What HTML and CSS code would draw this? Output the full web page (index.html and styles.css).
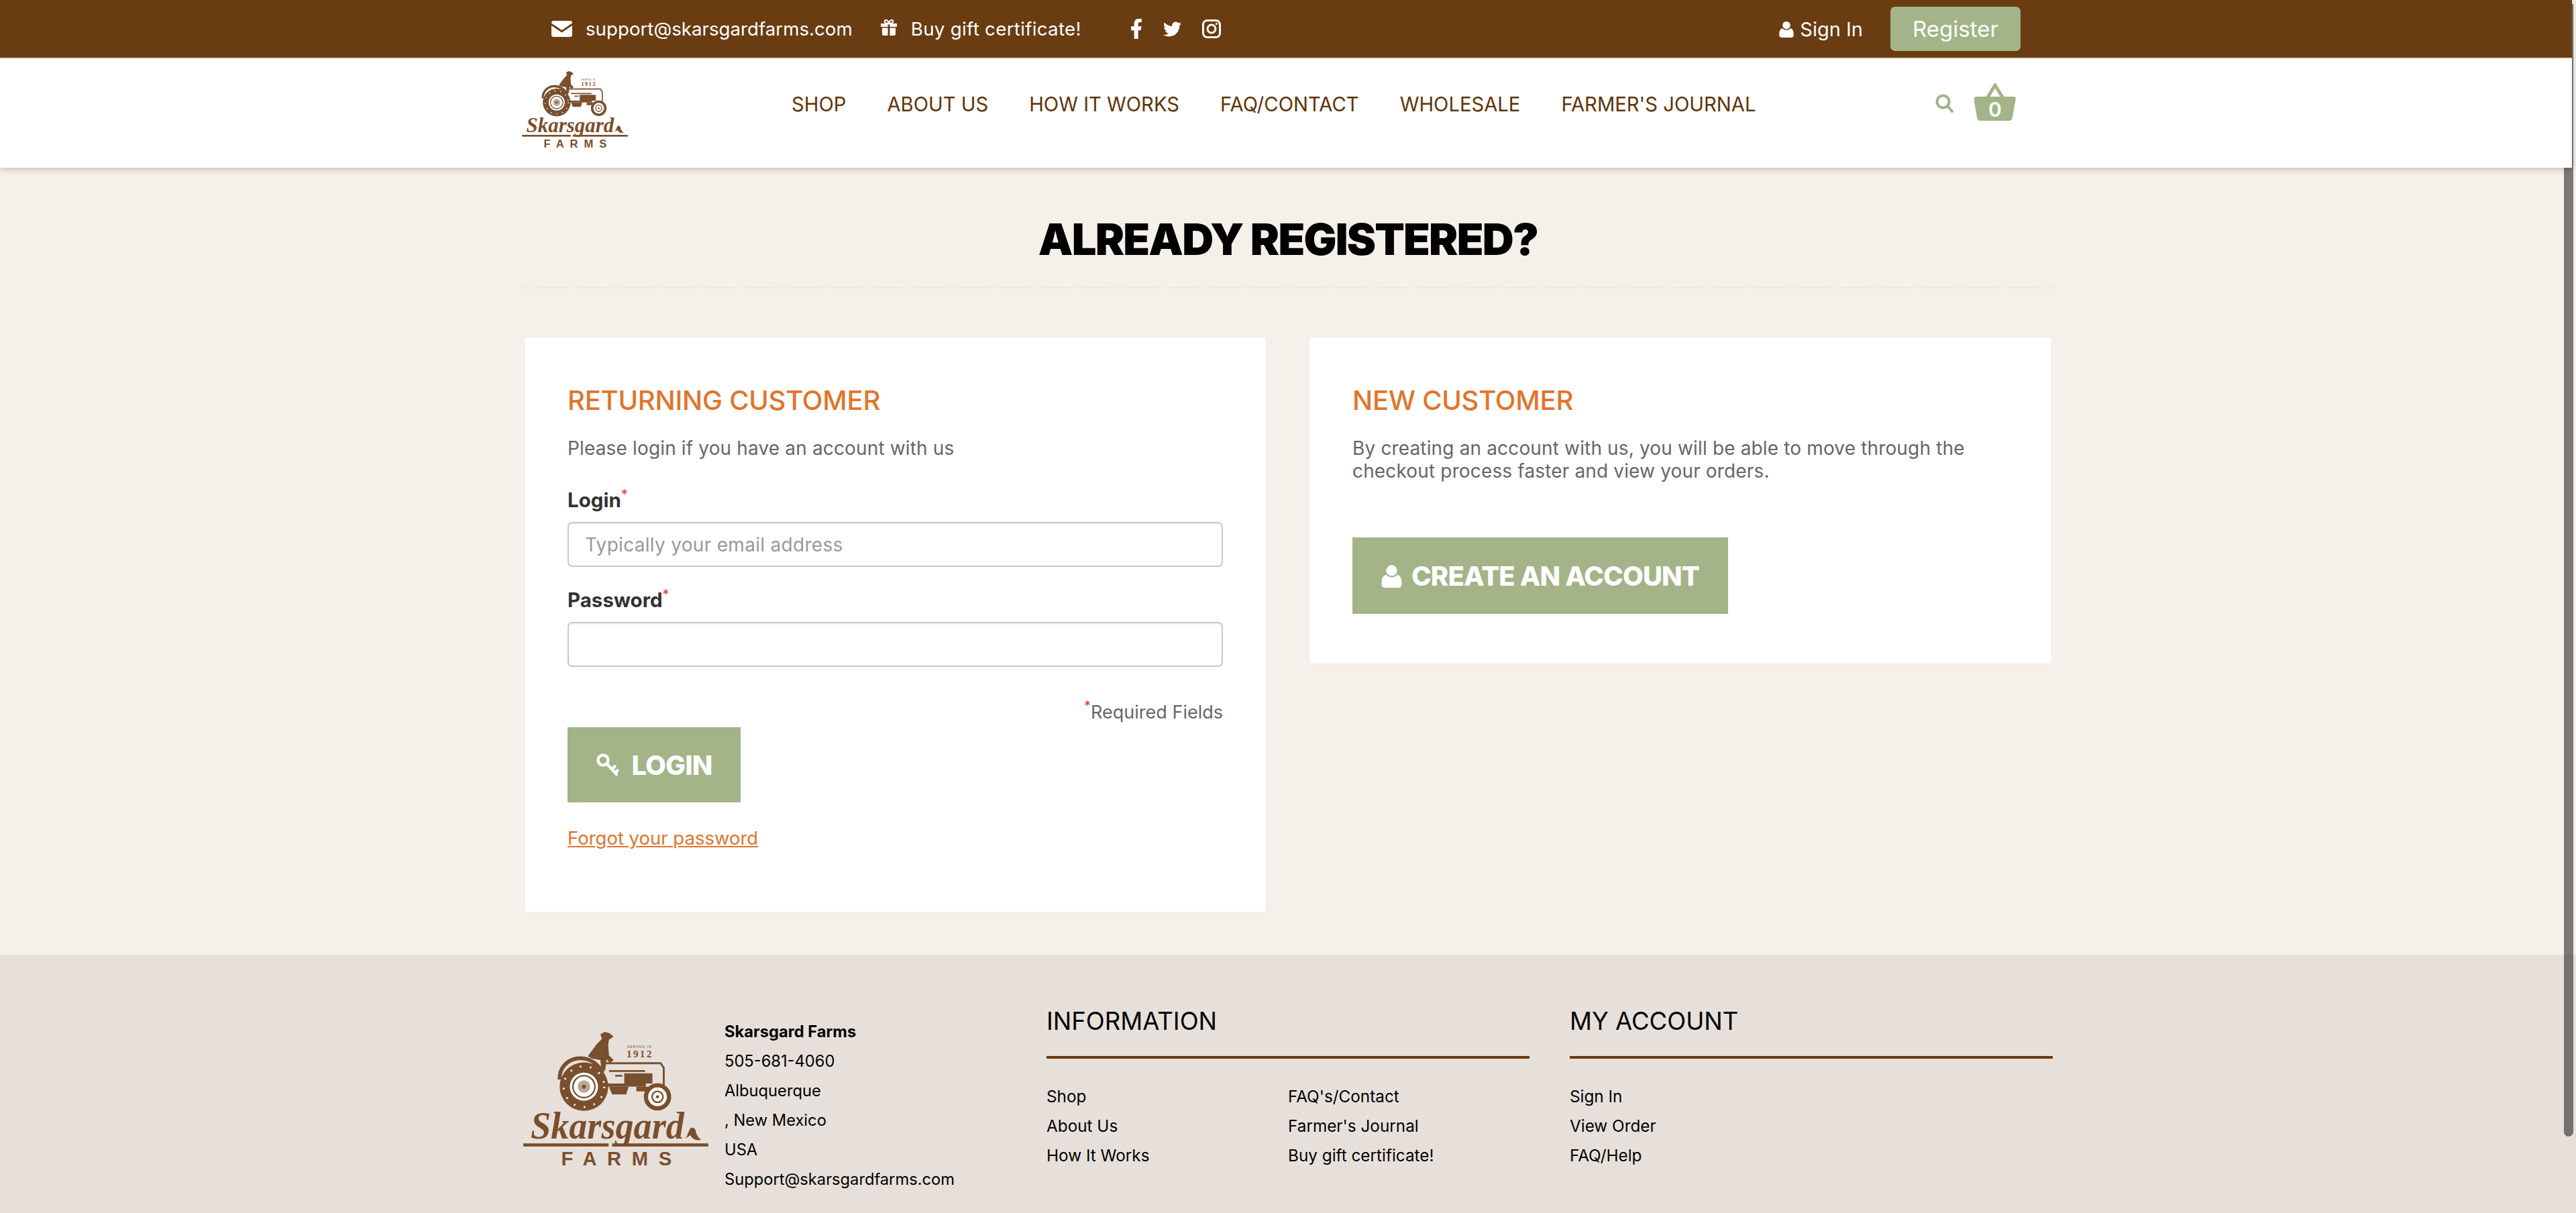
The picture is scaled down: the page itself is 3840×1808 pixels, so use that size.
FILE: index.html
```html
<!DOCTYPE html>
<html lang="en">
<head>
    <meta charset="UTF-8">
    <meta name="viewport" content="width=device-width, initial-scale=1.0">
    <title>Customer Login - Skarsgard Farms</title>
    <link rel="stylesheet" href="styles.css">
</head>
<body>
    <svg class="icon-defs" width="0" height="0" aria-hidden="true">
        <symbol id="user" viewBox="0 0 24 28">
            <circle cx="12" cy="7.5" r="6.5"/>
            <path d="M5.5 12.5c1.6 2 4 3 6.500 3s4.900-1 6.500-3c3.500.5 5.500 4 5.500 9v2.500c0 2.200-1.600 4-4 4h-16c-2.400 0-4-1.800-4-4v-2.500c0-5 2-8.500 5.500-9z"/>
        </symbol>
        <g id="logo-art">
            <!-- driver -->
            <path d="M192 112l22-30 14-14-4-12 12-6 12 4 10 8-12 8-2 14 2 26 12 12-10 8-8-10-4 30-10-6-2-22-22-4z"/>
            <!-- fender -->
            <path class="logo-line" d="M120 172c-2-28 18-50 44-54 26-3 50 8 66 36"/>
            <!-- hood and engine -->
            <path class="logo-thin" d="M232 130h146l8 12v46h-22M246 150h92M262 162h18"/>
            <rect x="285" y="156" width="72" height="26"/>
            <rect x="240" y="182" width="100" height="8"/>
            <path d="M246 190h50l-6 20h-36zM316 190h30v12h-30z"/>
            <!-- rear wheel -->
            <circle cx="182" cy="190" r="62"/>
            <circle class="logo-tread" cx="182" cy="190" r="52"/>
            <circle class="logo-cut" cx="182" cy="190" r="36"/>
            <circle class="logo-ring" cx="182" cy="190" r="28"/>
            <circle class="logo-hub" cx="182" cy="190" r="16"/>
            <circle cx="182" cy="190" r="5"/>
            <!-- front wheel -->
            <circle cx="370" cy="216" r="35"/>
            <circle class="logo-cut" cx="370" cy="216" r="24"/>
            <circle class="logo-ring" cx="370" cy="216" r="14"/>
            <circle cx="370" cy="216" r="4"/>
            <!-- plough tail and rule -->
            <path d="M440 322c6-2 8-16 14-26 8-4 14 2 14 10 2 8 8 16 14 20-12 2-22 0-28-12-4 2-6 6-14 8z"/>
            <rect x="27" y="335" width="218" height="8"/>
            <rect x="254" y="335" width="246" height="8"/>
        </g>
    </svg>

    <div class="scroll-thumb"></div>

    <header class="site-header">
        <div class="topbar">
            <div class="wrap topbar-inner">
                <a class="top-link email-link" href="#">
                    <svg class="icon-mail" viewBox="0 0 31 24">
                        <path d="M3 0h25c1.700 0 3 1.300 3 3v.5L15.500 14 0 3.500V3c0-1.700 1.300-3 3-3z"/>
                        <path d="M0 7l15.500 10.500L31 7v14c0 1.700-1.300 3-3 3H3c-1.700 0-3-1.300-3-3z"/>
                    </svg>
                    support@skarsgardfarms.com
                </a>
                <a class="top-link gift-link" href="#">
                    <svg class="icon-gift" viewBox="0 0 24 24">
                        <path d="M0 6h10.500v5H0zM13.500 6H24v5H13.500zM2 12.500h8.500V24H4c-1.100 0-2-.9-2-2zM13.500 12.500H22V22c0 1.100-.9 2-2 2h-6.500z"/>
                        <path class="icon-bow" d="M12 6C9 6 5.500 5 5.500 2.800 5.500.8 8.500.3 10 1.800c1 1 2 4.200 2 4.200s1-3.200 2-4.200c1.500-1.500 4.500-1 4.500 1C18.500 5 15 6 12 6z"/>
                    </svg>
                    Buy gift certificate!
                </a>
                <div class="socials">
                    <a href="#"><svg class="icon-fb" viewBox="7 2 10.500 20"><path d="M14 13.500h2.500l1-4H14v-2c0-1.030 0-2 2-2h1.500V2.140C17.174 2.097 15.943 2 14.643 2 11.928 2 10 3.657 10 6.700v2.800H7v4h3V22h4v-8.500z"/></svg></a>
                    <a href="#"><svg class="icon-tw" viewBox="0 2 24 20"><path d="M23.953 4.570a10 10 0 01-2.825.775 4.958 4.958 0 002.163-2.723c-.951.555-2.005.959-3.127 1.184a4.920 4.920 0 00-8.384 4.482C7.690 8.095 4.067 6.130 1.640 3.162a4.822 4.822 0 00-.666 2.475c0 1.710.870 3.213 2.188 4.096a4.904 4.904 0 01-2.228-.616v.060a4.923 4.923 0 003.946 4.827 4.996 4.996 0 01-2.212.085 4.936 4.936 0 004.604 3.417 9.867 9.867 0 01-6.102 2.105c-.390 0-.779-.023-1.170-.067a13.995 13.995 0 007.557 2.209c9.053 0 13.998-7.496 13.998-13.985 0-.210 0-.420-.015-.630A9.935 9.935 0 0024 4.590z"/></svg></a>
                    <a href="#"><svg class="icon-ig" viewBox="0 0 28 28"><rect x="1.500" y="1.500" width="25" height="25" rx="6"/><circle cx="14" cy="14" r="6"/><circle class="icon-dot" cx="21.500" cy="6.500" r="1.600"/></svg></a>
                </div>
                <div class="account-links">
                    <a class="sign-in" href="#"><svg class="icon-user"><use href="#user"/></svg>Sign In</a>
                    <a class="register-btn" href="#">Register</a>
                </div>
            </div>
        </div>
        <div class="navbar">
            <div class="wrap navbar-inner">
                <svg class="nav-logo" viewBox="27 50 473 360">
                    <g class="logo-art">
                        <use href="#logo-art"/>
                        <text class="logo-small" x="323" y="92" text-anchor="middle" textLength="62">SERVED IN</text>
                        <text class="logo-year" x="323" y="115" text-anchor="middle" textLength="64">1912</text>
                        <text class="logo-name" x="46" y="322" textLength="392" lengthAdjust="spacingAndGlyphs">Skarsgard</text>
                        <text class="logo-farms" x="124" y="391" textLength="282">FARMS</text>
                    </g>
                </svg>
                <nav class="main-nav">
                    <a href="#">SHOP</a>
                    <a href="#">ABOUT US</a>
                    <a href="#">HOW IT WORKS</a>
                    <a href="#">FAQ/CONTACT</a>
                    <a href="#">WHOLESALE</a>
                    <a href="#">FARMER'S JOURNAL</a>
                </nav>
                <svg class="icon-search" viewBox="0 0 27 28">
                    <circle cx="11.500" cy="11.500" r="9"/>
                    <path d="M18 18l7 8"/>
                </svg>
                <div class="basket">
                    <svg class="icon-basket" viewBox="0 0 62 56">
                        <path class="basket-handle" d="M18 24L31 3l13 21"/>
                        <path d="M3 20h56c2 0 3 1.500 2.800 3.500l-5 28c-.4 2.500-2 4.500-4.800 4.500H9c-2.800 0-4.400-2-4.800-4.500l-5-28C0 21.500 1 20 3 20z"/>
                    </svg>
                    <span class="basket-count">0</span>
                </div>
            </div>
        </div>
    </header>

    <main class="wrap page-main">
        <h1 class="page-title">ALREADY REGISTERED?</h1>
        <div class="cards">
            <section class="card">
                <h2>RETURNING CUSTOMER</h2>
                <p>Please login if you have an account with us</p>
                <form class="login-form">
                    <label for="login">Login<span class="req">*</span></label>
                    <input type="text" id="login" placeholder="Typically your email address">
                    <label class="password-label" for="password">Password<span class="req">*</span></label>
                    <input type="password" id="password">
                    <div class="required-note"><span class="req">*</span>Required Fields</div>
                    <button type="button" class="action-btn login-btn">
                        <svg class="icon-key" viewBox="0 0 36 36">
                            <circle cx="11" cy="11" r="7.500"/>
                            <path d="M16.500 16.500L31 32M24 24.500l4.500-4M29 29.500l3.500-3"/>
                        </svg>
                        LOGIN
                    </button>
                    <a class="forgot-link" href="#">Forgot your password</a>
                </form>
            </section>
            <section class="card">
                <h2>NEW CUSTOMER</h2>
                <p>By creating an account with us, you will be able to move through the checkout process faster and view your orders.</p>
                <a class="action-btn create-btn" href="#"><svg class="icon-user-lg"><use href="#user"/></svg>CREATE AN ACCOUNT</a>
            </section>
        </div>
    </main>

    <footer class="site-footer">
        <div class="wrap footer-grid">
            <div class="footer-brand">
                <svg class="footer-logo" viewBox="27 50 473 360">
                    <g class="logo-art">
                        <use href="#logo-art"/>
                        <text class="logo-small" x="323" y="92" text-anchor="middle" textLength="62">SERVED IN</text>
                        <text class="logo-year" x="323" y="115" text-anchor="middle" textLength="64">1912</text>
                        <text class="logo-name" x="46" y="322" textLength="392" lengthAdjust="spacingAndGlyphs">Skarsgard</text>
                        <text class="logo-farms" x="124" y="391" textLength="282">FARMS</text>
                    </g>
                </svg>
                <address>
                    <strong>Skarsgard Farms</strong>
                    <div>505-681-4060</div>
                    <div>Albuquerque</div>
                    <div>, New Mexico</div>
                    <div>USA</div>
                    <div>Support@skarsgardfarms.com</div>
                </address>
            </div>
            <div class="footer-col">
                <h3>INFORMATION</h3>
                <ul class="footer-links two-col">
                    <li><a href="#">Shop</a></li>
                    <li><a href="#">FAQ's/Contact</a></li>
                    <li><a href="#">About Us</a></li>
                    <li><a href="#">Farmer's Journal</a></li>
                    <li><a href="#">How It Works</a></li>
                    <li><a href="#">Buy gift certificate!</a></li>
                </ul>
            </div>
            <div class="footer-col">
                <h3>MY ACCOUNT</h3>
                <ul class="footer-links">
                    <li><a href="#">Sign In</a></li>
                    <li><a href="#">View Order</a></li>
                    <li><a href="#">FAQ/Help</a></li>
                </ul>
            </div>
        </div>
    </footer>
</body>
</html>
```

FILE: styles.css
```css
* {
    box-sizing: border-box;
}
html, body {
    height: 1808px;
    overflow: hidden;
}
body {
    margin: 0;
    background-color: #f5f0e9;
    font-family: Inter, "Open Sans", sans-serif;
    color: #666;
    display: flex;
    flex-direction: column;
}
a {
    color: inherit;
    text-decoration: none;
}
.icon-defs {
    position: absolute;
}
.wrap {
    width: 2280px;
    margin: 0 auto;
}

/* fake overlay scrollbar */
.scroll-thumb {
    position: absolute;
    top: 6px;
    right: 4px;
    width: 14px;
    height: 1688px;
    background: rgba(0, 0, 0, 0.5);
    border-radius: 0 0 7px 7px;
    z-index: 1;
}

/* header */
.site-header {
    position: relative;
    z-index: 2;
    width: 3834px;
    box-shadow: 0 2px 10px rgba(0, 0, 0, 0.22);
}
.topbar {
    background: #693c12;
    height: 88px;
    border-bottom: 2px solid #e7e0da;
    color: white;
}
.topbar-inner {
    height: 86px;
    display: flex;
    align-items: center;
    padding: 0 45px 0 45px;
    font-size: 27.7px;
}
.top-link {
    display: flex;
    align-items: center;
}
.top-link svg {
    fill: white;
}
.icon-mail {
    width: 31px;
    height: 24px;
    margin-right: 20px;
}
.gift-link {
    margin-left: 42px;
    letter-spacing: 0.3px;
}
.icon-gift {
    width: 24px;
    height: 24px;
    margin-right: 21px;
    margin-top: -4px;
}
.icon-gift .icon-bow {
    fill: none;
    stroke: white;
    stroke-width: 2;
}
.socials {
    display: flex;
    align-items: center;
    margin-left: 74px;
}
.socials a {
    display: flex;
}
.socials svg {
    fill: white;
}
.icon-fb {
    width: 16px;
    height: 30px;
}
.icon-tw {
    width: 27px;
    height: 23px;
    margin-left: 32px;
}
.icon-ig {
    width: 28px;
    height: 28px;
    margin-left: 31px;
}
.socials .icon-ig {
    fill: none;
    stroke: white;
    stroke-width: 3;
}
.socials .icon-ig .icon-dot {
    fill: white;
    stroke: none;
}
.account-links {
    margin-left: auto;
    display: flex;
    align-items: center;
}
.sign-in {
    display: flex;
    align-items: center;
    font-size: 29px;
}
.icon-user {
    width: 22px;
    height: 25px;
    margin-right: 9px;
    fill: white;
}
.register-btn {
    margin-left: 41px;
    width: 194px;
    height: 66px;
    margin-bottom: 1px;
    background: #a2b488;
    border-radius: 7px;
    font-size: 33px;
    display: flex;
    align-items: center;
    justify-content: center;
}
.navbar {
    background: white;
    height: 162px;
}
.navbar-inner {
    height: 162px;
    display: flex;
    align-items: center;
}
.nav-logo {
    width: 158px;
    height: 120px;
    margin-left: 1px;
    margin-top: -7px;
}
.main-nav {
    display: flex;
    gap: 61px;
    margin-left: 244px;
    font-size: 29.2px;
    color: #5f3409;
    margin-top: -27px;
}
.icon-search {
    width: 27px;
    height: 28px;
    margin-left: auto;
    margin-top: -30px;
    fill: none;
    stroke: #a2b488;
    stroke-width: 4;
    stroke-linecap: round;
}
.basket {
    position: relative;
    width: 62px;
    height: 56px;
    margin-left: 31px;
    margin-right: 52px;
    margin-top: -34px;
}
.icon-basket {
    display: block;
    width: 62px;
    height: 56px;
    fill: #a2b488;
}
.icon-basket .basket-handle {
    fill: none;
    stroke: #a2b488;
    stroke-width: 5;
}
.basket-count {
    position: absolute;
    left: 0;
    right: 0;
    top: 22px;
    text-align: center;
    color: white;
    font-size: 30px;
    font-weight: 600;
    line-height: 34px;
}

/* login area */
.page-main {
    flex: none;
    padding-bottom: 63px;
}
.page-title {
    margin: 0 0 72px;
    height: 180px;
    padding-top: 67px;
    line-height: 80px;
    font-size: 65px;
    font-weight: 900;
    letter-spacing: -1.8px;
    color: black;
    text-align: center;
    border-bottom: 2px dashed #e6e6e6;
}
.cards {
    display: grid;
    grid-template-columns: 1107px 1108px;
    gap: 63px;
    align-items: start;
    margin-left: 1px;
}
.card {
    background: white;
    border: 1px solid #ebebeb;
    border-radius: 4px;
    padding: 69px 64px 74px 64px;
}
.card h2 {
    margin: 0;
    font-size: 40px;
    font-weight: 500;
    letter-spacing: -0.25px;
    line-height: 50px;
    color: #e0752c;
}
.card p {
    margin: 29px 0 0;
    font-size: 28px;
    letter-spacing: 0.15px;
    line-height: 34px;
}
.login-form {
    display: flex;
    flex-direction: column;
    align-items: flex-start;
    margin-top: 43px;
}
.login-form label {
    font-size: 29.5px;
    font-weight: 700;
    line-height: 34px;
    color: #333;
}
.login-form .password-label {
    margin-top: 32px;
}
.req {
    color: #e8392a;
    font-size: 20px;
    font-weight: 400;
    vertical-align: 12px;
    line-height: 0;
}
.login-form input {
    width: 100%;
    height: 67px;
    margin-top: 16px;
    padding: 0 24px;
    border: 2px solid #c8c8c8;
    border-radius: 7px;
    box-shadow: inset 0 2px 2px rgba(0, 0, 0, 0.05);
    font-family: inherit;
    font-size: 28px;
    letter-spacing: 0.3px;
    outline: none;
}
.login-form input::placeholder {
    color: #999;
}
.required-note {
    align-self: flex-end;
    margin-top: 51px;
    font-size: 27px;
    line-height: 34px;
}
.action-btn {
    display: flex;
    align-items: center;
    justify-content: center;
    background: #a2b488;
    color: white;
    border: none;
    font-family: inherit;
    font-size: 40px;
    font-weight: 800;
    letter-spacing: -0.9px;
    cursor: pointer;
}
.login-btn {
    width: 258px;
    height: 112px;
    margin-top: 5px;
}
.icon-key {
    width: 36px;
    height: 36px;
    margin-right: 17px;
    fill: none;
    stroke: white;
    stroke-width: 4.500;
    stroke-linecap: round;
}
.forgot-link {
    margin-top: 36px;
    margin-bottom: 19px;
    font-size: 27.5px;
    line-height: 34px;
    color: #e0752c;
    text-decoration: underline;
}
.create-btn {
    width: 560px;
    height: 114px;
    margin-top: 82px;
}
.icon-user-lg {
    width: 31px;
    height: 35px;
    margin-right: 14px;
    fill: white;
}

/* logo artwork */
.logo-art, #logo-art {
    fill: #7a4f2d;
}
.logo-line {
    fill: none;
    stroke: #7a4f2d;
    stroke-width: 10;
}
.logo-thin {
    fill: none;
    stroke: #7a4f2d;
    stroke-width: 5;
}
.logo-tread {
    fill: none;
    stroke: white;
    stroke-width: 5;
    stroke-dasharray: 4 22;
}
.logo-cut {
    fill: white;
}
.logo-ring {
    fill: none;
    stroke: #7a4f2d;
    stroke-width: 4;
}
.logo-hub {
    fill: #7a4f2d;
    opacity: 0.5;
}
.logo-small {
    font-family: "Liberation Sans", sans-serif;
    font-size: 9px;
}
.logo-year {
    font-family: "Liberation Serif", serif;
    font-weight: 700;
    font-size: 26px;
}
.logo-name {
    font-family: "Liberation Serif", serif;
    font-style: italic;
    font-weight: 700;
    font-size: 96px;
}
.logo-farms {
    font-family: "Liberation Sans", sans-serif;
    font-weight: 700;
    font-size: 50px;
}

/* footer */
.site-footer {
    flex: 1;
    background: #e7e0da;
    color: black;
}
.footer-grid {
    display: grid;
    grid-template-columns: 720px 720px 720px;
    gap: 60px;
    padding-top: 74px;
}
.footer-brand {
    display: flex;
    align-items: flex-start;
    padding-top: 41px;
}
.footer-logo {
    width: 276px;
    height: 210px;
    margin-right: 24px;
}
.footer-brand address {
    margin-top: -22px;
    font-style: normal;
    font-size: 23.7px;
    line-height: 44px;
}
.footer-brand strong {
    font-weight: 700;
}
.footer-col h3 {
    margin: 0;
    height: 81px;
    border-bottom: 4px solid #693c12;
    font-size: 36.5px;
    font-weight: 400;
    line-height: 50px;
}
.footer-links {
    list-style: none;
    margin: 34px 0 0;
    padding: 0;
    font-size: 24.3px;
    line-height: 44px;
}
.two-col {
    display: grid;
    grid-template-columns: 360px 360px;
}
```
